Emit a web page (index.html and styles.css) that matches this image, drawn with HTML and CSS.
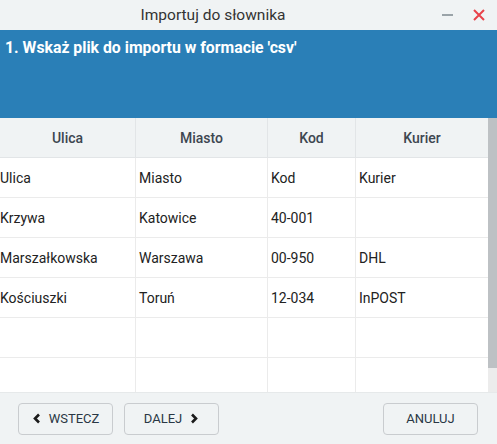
FILE: index.html
```html
<!DOCTYPE html>
<html lang="pl">
<head>
    <meta charset="UTF-8">
    <title>Importuj do słownika</title>
    <link rel="stylesheet" href="styles.css">
</head>
<body>
    <div class="dialog">
        <div class="titlebar">
            <span class="title">Importuj do słownika</span>
            <span class="win-btn minimize"></span>
            <span class="win-btn close">
                <svg width="12" height="12" viewBox="0 0 12 12"><path d="M1 1L11 11M11 1L1 11" stroke="#e8424a" stroke-width="2"/></svg>
            </span>
        </div>
        <div class="step">1. Wskaż plik do importu w formacie 'csv'</div>
        <div class="grid-wrap">
            <div class="grid">
                <div class="row head">
                    <div class="cell">Ulica</div>
                    <div class="cell">Miasto</div>
                    <div class="cell">Kod</div>
                    <div class="cell">Kurier</div>
                </div>
                <div class="row">
                    <div class="cell">Ulica</div>
                    <div class="cell">Miasto</div>
                    <div class="cell">Kod</div>
                    <div class="cell">Kurier</div>
                </div>
                <div class="row">
                    <div class="cell">Krzywa</div>
                    <div class="cell">Katowice</div>
                    <div class="cell">40-001</div>
                    <div class="cell"></div>
                </div>
                <div class="row">
                    <div class="cell">Marszałkowska</div>
                    <div class="cell">Warszawa</div>
                    <div class="cell">00-950</div>
                    <div class="cell">DHL</div>
                </div>
                <div class="row">
                    <div class="cell">Kościuszki</div>
                    <div class="cell">Toruń</div>
                    <div class="cell">12-034</div>
                    <div class="cell">InPOST</div>
                </div>
                <div class="row">
                    <div class="cell"></div><div class="cell"></div><div class="cell"></div><div class="cell"></div>
                </div>
                <div class="row last">
                    <div class="cell"></div><div class="cell"></div><div class="cell"></div><div class="cell"></div>
                </div>
            </div>
            <div class="scrollbar"><div class="thumb"></div></div>
        </div>
        <div class="footer">
            <button class="btn">
                <svg width="9" height="11" viewBox="0 0 9 11"><path d="M7 1.5L3 5.5L7 9.5" fill="none" stroke="#1a1a1a" stroke-width="2.6"/></svg>
                WSTECZ
            </button>
            <button class="btn">
                DALEJ
                <svg width="9" height="11" viewBox="0 0 9 11"><path d="M2 1.5L6 5.5L2 9.5" fill="none" stroke="#1a1a1a" stroke-width="2.6"/></svg>
            </button>
            <button class="btn cancel">ANULUJ</button>
        </div>
    </div>
</body>
</html>
```

FILE: styles.css
```css
* { margin: 0; padding: 0; box-sizing: border-box; }
body {
    font-family: Roboto, "Liberation Sans", sans-serif;
    background: #f0f3f4;
    color: #222;
    font-size: 14px;
}
.dialog { width: 497px; height: 444px; display: flex; flex-direction: column; overflow: hidden; }

.titlebar {
    height: 30px; display: flex; align-items: center;
    background: #f0f3f4;
}
.title {
    flex: 1; text-align: center; font-size: 15.5px; color: #333;
    padding-left: 8px; padding-right: 13px;
}
.win-btn { width: 32px; height: 30px; display: flex; align-items: center; justify-content: center; }
.minimize::before {
    content: ""; width: 11px; height: 2px; background: #9aa3a8; display: block;
}
.close { margin-right: 2px; }

.step {
    background: #2a7fb7; color: #fff;
    font-weight: bold; font-size: 15.8px;
    height: 88px; padding: 8px 5px;
}

.grid-wrap { display: flex; height: 274px; background: #fff; }
.grid { flex: 1; }
.row {
    display: grid; grid-template-columns: 136px 132px 88px 1fr;
    height: 40px; border-bottom: 1px solid #ebebeb;
}
.row.last { height: 34px; border-bottom: none; }
.cell {
    border-right: 1px solid #ebebeb;
    display: flex; align-items: center; padding-left: 3px;
}
.cell:first-child { padding-left: 0; }
.cell:last-child { border-right: none; }
.head { background: #f0f3f4; border-bottom: 1px solid #e2e5e7; }
.head .cell {
    justify-content: center; padding: 0;
    font-weight: 500; color: #3d4650; border-right-color: #e2e5e7;
}
.scrollbar { width: 9px; background: #ececec; }
.thumb { height: 250px; background: #bdc1c4; }

.footer {
    flex: 1; display: flex; align-items: center; gap: 11px;
    padding: 0 19px 0 18px; border-top: 1px solid #e6e9ea;
}
.btn {
    height: 32px; width: 95px;
    border: 1px solid #c9cccf; border-radius: 4px;
    background: #f0f3f4; color: #2a3744;
    font-family: Roboto, "Liberation Sans", sans-serif;
    font-size: 13px; font-weight: 400;
    display: flex; align-items: center; justify-content: center; gap: 8px;
}
.btn.cancel { margin-left: auto; }
```
